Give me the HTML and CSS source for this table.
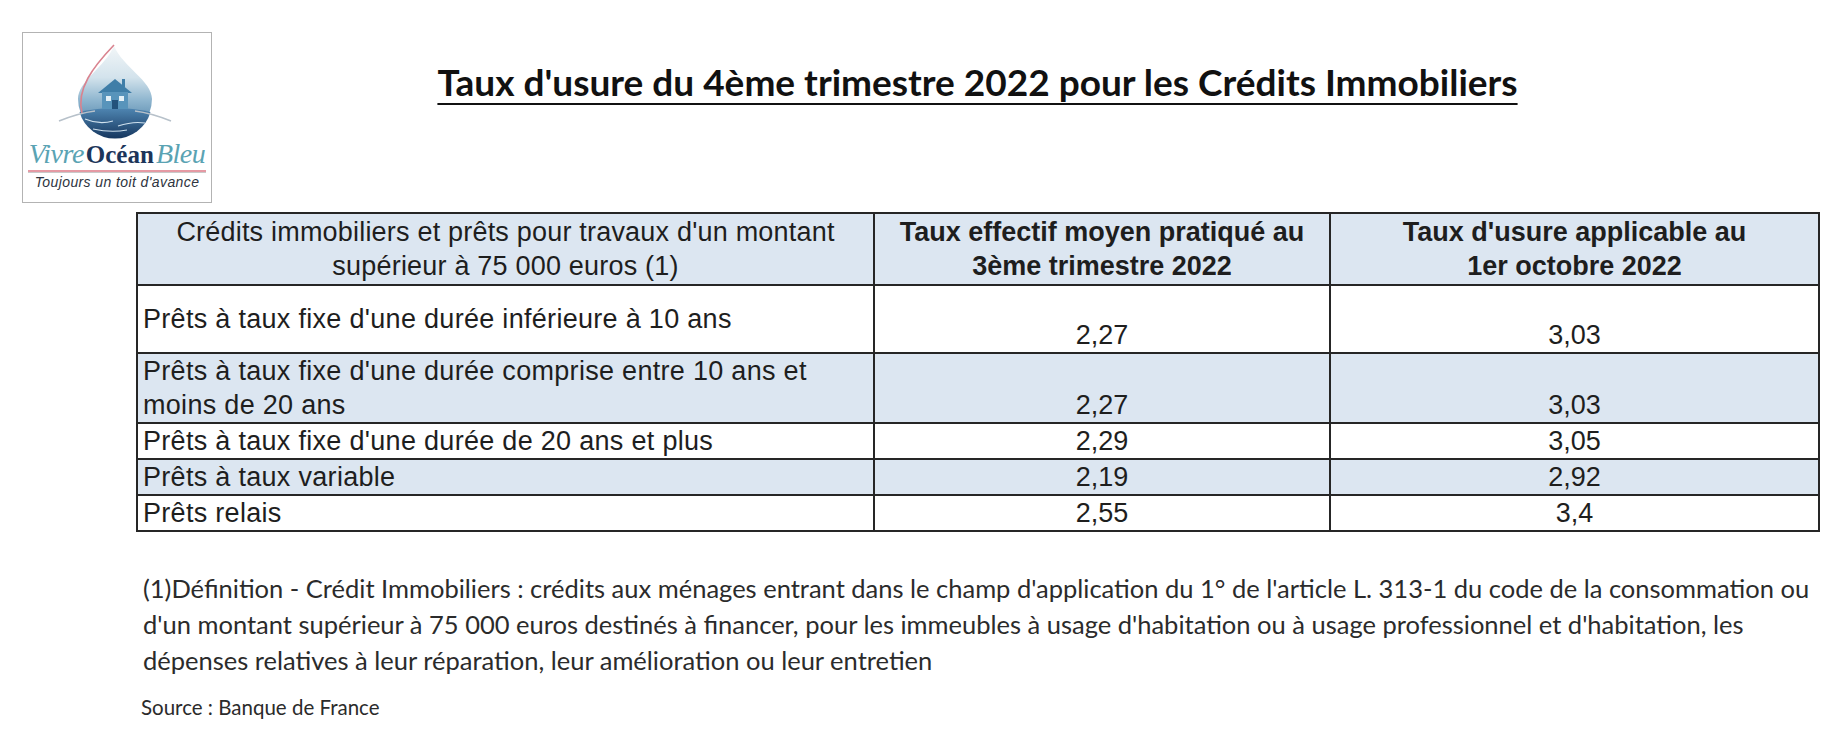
FILE: index.html
```html
<!DOCTYPE html>
<html lang="fr">
<head>
<meta charset="utf-8">
<title>Taux d'usure du 4ème trimestre 2022</title>
<link rel="stylesheet" href="styles.css">
</head>
<body>
<div class="page">
  <header class="top">
    <div class="logo">
      <svg class="logo-art" viewBox="0 0 188 106" width="188" height="106" aria-hidden="true">
        <defs>
          <linearGradient id="dropFill" x1="0" y1="0" x2="0" y2="1">
            <stop offset="0" stop-color="#f2f6f8"/>
            <stop offset="0.35" stop-color="#d3e3ec"/>
            <stop offset="0.6" stop-color="#8fb6cf"/>
            <stop offset="1" stop-color="#3a6f9a"/>
          </linearGradient>
          <linearGradient id="water" x1="0" y1="0" x2="0" y2="1">
            <stop offset="0" stop-color="#4f86b2"/>
            <stop offset="1" stop-color="#16375f"/>
          </linearGradient>
        </defs>
        <path d="M91 13 C 82 34, 55 48, 55 66 A 37 37 0 0 0 129 66 C 129 48, 100 34, 91 13 Z" fill="url(#dropFill)"/>
        <path d="M56.5 79 Q 92 71 127.5 79 A 37 37 0 0 1 56.5 79 Z" fill="url(#water)"/>
        <path d="M62 86 Q 76 92 90 88 M95 93 Q 110 88 122 90 M70 96 Q 88 100 104 97" stroke="#cfe1ee" stroke-width="1.1" fill="none"/>
        <path d="M91 12 C 70 34, 53 56, 59 80" stroke="#d9838f" stroke-width="1.6" fill="none"/>
        <path d="M36 88 Q 56 80 72 78 M112 78 Q 128 80 148 88" stroke="#b7c1ca" stroke-width="1.6" fill="none"/>
        <path d="M75 60 L 92 46 L 109 60 Z" fill="#3f7ea8"/>
        <rect x="79" y="59" width="26" height="17" fill="#5894bb"/>
        <rect x="83" y="63" width="5" height="5" fill="#e3f0f7"/>
        <rect x="96" y="63" width="5" height="5" fill="#e3f0f7"/>
        <rect x="89" y="67" width="6" height="9" fill="#23527b"/>
        <rect x="99" y="46" width="3" height="8" fill="#3f7ea8"/>
      </svg>
      <div class="logo-name"><span class="script">Vivre</span><span class="ocean">Océan</span><span class="script">Bleu</span></div>
      <div class="logo-rule"></div>
      <div class="logo-tag">Toujours un toit d'avance</div>
    </div>
    <h1 class="title">Taux d'usure du 4ème trimestre 2022 pour les Crédits Immobiliers</h1>
  </header>

  <table class="rates">
    <colgroup>
      <col class="c1">
      <col class="c2">
      <col class="c3">
    </colgroup>
    <thead>
      <tr class="r-head">
        <th class="h-label">Crédits immobiliers et prêts pour travaux d'un montant<br>supérieur à 75 000 euros (1)</th>
        <th>Taux effectif moyen pratiqué au<br>3ème trimestre 2022</th>
        <th>Taux d'usure applicable au<br>1er octobre 2022</th>
      </tr>
    </thead>
    <tbody>
      <tr class="r-tall">
        <td class="label">Prêts à taux fixe d'une durée inférieure à 10 ans</td>
        <td class="num">2,27</td>
        <td class="num">3,03</td>
      </tr>
      <tr class="r-tall alt">
        <td class="label">Prêts à taux fixe d'une durée comprise entre 10 ans et<br>moins de 20 ans</td>
        <td class="num">2,27</td>
        <td class="num">3,03</td>
      </tr>
      <tr class="r-one">
        <td class="label">Prêts à taux fixe d'une durée de 20 ans et plus</td>
        <td class="num">2,29</td>
        <td class="num">3,05</td>
      </tr>
      <tr class="r-one alt">
        <td class="label">Prêts à taux variable</td>
        <td class="num">2,19</td>
        <td class="num">2,92</td>
      </tr>
      <tr class="r-one">
        <td class="label">Prêts relais</td>
        <td class="num">2,55</td>
        <td class="num">3,4</td>
      </tr>
    </tbody>
  </table>

  <p class="note">(1)Définition - Crédit Immobiliers : crédits aux ménages entrant dans le champ d'application du 1° de l'article L. 313-1 du code de la consommation ou<br>d'un montant supérieur à 75 000 euros destinés à financer, pour les immeubles à usage d'habitation ou à usage professionnel et d'habitation, les<br>dépenses relatives à leur réparation, leur amélioration ou leur entretien</p>
  <p class="source">Source : Banque de France</p>
</div>
</body>
</html>
```

FILE: styles.css
```css
html, body {
  margin: 0;
  padding: 0;
  background: #ffffff;
}

.page {
  width: 1846px;
  height: 742px;
  overflow: hidden;
  font-family: "Liberation Sans", Arial, sans-serif;
  color: #1e1e1e;
}

.top {
  display: flex;
  align-items: flex-start;
}

.logo {
  box-sizing: border-box;
  width: 190px;
  height: 171px;
  margin: 32px 0 0 22px;
  border: 1px solid #b3b3b3;
  background: #ffffff;
  display: flex;
  flex-direction: column;
  align-items: center;
}

.logo-art {
  display: block;
}

.logo-name {
  height: 30px;
  line-height: 30px;
  white-space: nowrap;
  font-family: "Liberation Serif", serif;
}

.logo-name .script {
  color: #5aa3b3;
  font-style: italic;
  font-size: 28px;
  letter-spacing: -0.5px;
}

.logo-name .ocean {
  color: #1c355a;
  font-weight: bold;
  font-size: 25px;
  margin: 0 2px;
}

.logo-rule {
  width: 178px;
  height: 0;
  margin-top: 1px;
  border-top: 2px solid #e59aa4;
  border-bottom: 1px solid #c9c9c9;
}

.logo-tag {
  margin-top: 1px;
  font-family: "Liberation Sans", Arial, sans-serif;
  font-style: italic;
  font-size: 14px;
  line-height: 17px;
  letter-spacing: 0.4px;
  color: #2e3440;
  white-space: nowrap;
}

.title {
  flex: 1;
  margin: 60px 103px 0 0;
  text-align: center;
  font-family: Lato, "Open Sans", sans-serif;
  font-weight: bold;
  font-size: 37px;
  line-height: 44px;
  color: #111111;
  text-decoration: underline;
  text-decoration-thickness: 2px;
  text-underline-offset: 7px;
  white-space: nowrap;
}

.rates {
  margin: 9px 0 0 136px;
  width: 1682px;
  table-layout: fixed;
  border-collapse: collapse;
  font-size: 27px;
  color: #1e1e1e;
}

.rates .c1 { width: 737px; }
.rates .c2 { width: 456px; }
.rates .c3 { width: 489px; }

.rates th,
.rates td {
  border: 2px solid #262626;
  padding: 0 5px;
  line-height: 34px;
}

.rates thead th {
  background: #dce6f1;
  font-weight: bold;
  text-align: center;
  vertical-align: middle;
}

.rates thead th.h-label {
  font-weight: normal;
  letter-spacing: 0.2px;
}

.rates tbody td {
  border-top-color: #404040;
}

.rates .alt td {
  background: #dce6f1;
}

.r-head { height: 72px; }
.r-tall { height: 68px; }
.r-one { height: 35px; }

.rates td.label {
  text-align: left;
  vertical-align: middle;
  white-space: nowrap;
  letter-spacing: 0.3px;
}

.rates td.num {
  text-align: center;
  vertical-align: bottom;
}

.note {
  margin: 38px 0 0 143px;
  font-family: Lato, "Open Sans", sans-serif;
  font-size: 25.5px;
  line-height: 36px;
  color: #2b2b2b;
  white-space: nowrap;
}

.source {
  margin: 17px 0 0 141px;
  font-family: Lato, "Open Sans", sans-serif;
  font-size: 20.5px;
  line-height: 24px;
  color: #2b2b2b;
}
```
